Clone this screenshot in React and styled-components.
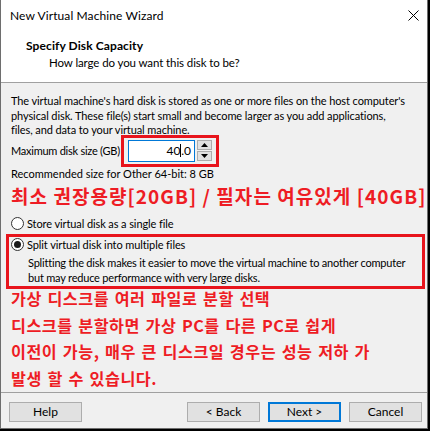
import React from "react";
import styled, { createGlobalStyle } from "styled-components";

const GlobalStyle = createGlobalStyle`
  html, body {
    margin: 0;
    padding: 0;
    background: #000;
  }
  body {
    font-family: Lato, "Liberation Sans", "Noto Sans CJK KR", sans-serif;
    font-size: 11px;
    letter-spacing: -0.1px;
    color: #000;
  }
`;

const Window = styled.div`
  width: 426px;
  height: 428px;
  border: 1px solid #6e6e6e;
  border-top: none;
  background: #f0f0f0;
  display: flex;
  flex-direction: column;
`;

const TitleBar = styled.div`
  flex-shrink: 0;
  height: 30px;
  background: #fff;
  display: flex;
  align-items: center;
  justify-content: space-between;
  padding: 0 0 0 9px;
  font-size: 12px;
  letter-spacing: 0.1px;
`;

const CloseBox = styled.div`
  width: 28px;
  height: 30px;
  display: flex;
  align-items: center;
  justify-content: center;
`;

const Header = styled.div`
  flex-shrink: 0;
  background: #fff;
  height: 53px;
  border-bottom: 1px solid #a0a0a0;
  padding: 8px 0 0 25px;
  box-sizing: border-box;
`;

const HeaderTitle = styled.div`
  font-weight: bold;
  font-size: 12px;
  letter-spacing: 0.1px;
  line-height: 15px;
`;

const HeaderSub = styled.div`
  margin: 2px 0 0 23px;
  line-height: 15px;
  font-size: 11.5px;
`;

const Body = styled.div`
  flex: 1;
  min-height: 0;
  padding: 11px 4px 0 10px;
  display: flex;
  flex-direction: column;
`;

const Paragraph = styled.p`
  margin: 0;
  line-height: 14.5px;
  white-space: nowrap;
`;

const SizeRow = styled.div`
  display: flex;
  align-items: center;
  height: 31px;
  margin-top: -2.5px;
`;

const SizeLabel = styled.span`
  letter-spacing: -0.25px;
  margin-right: 1px;
`;

const Highlight = styled.div`
  border: 3px solid #e8141c;
  display: flex;
  align-items: center;
  padding: 2px 4px;
`;

const NumberBox = styled.div`
  width: 67px;
  height: 22px;
  border: 1px solid #0078d7;
  background: #fff;
  display: flex;
  align-items: center;
  justify-content: flex-end;
  padding-right: 3px;
  box-sizing: border-box;
  font-size: 12px;
`;

const Caret = styled.span`
  display: inline-block;
  width: 1px;
  height: 13px;
  background: #000;
`;

const Spin = styled.div`
  display: flex;
  flex-direction: column;
  gap: 1px;
  margin-left: 2px;
`;

const SpinButton = styled.div`
  width: 15px;
  height: 10px;
  box-sizing: border-box;
  border: 1px solid #adadad;
  background: #e1e1e1;
  display: flex;
  align-items: center;
  justify-content: center;
`;

const Recommended = styled.div`
  margin-top: 1px;
  line-height: 14px;
  letter-spacing: 0;
`;

const BigNote = styled.div`
  color: #ee1c24;
  font-family: "Noto Sans CJK KR", "Liberation Sans", sans-serif;
  font-weight: bold;
  font-size: 19px;
  line-height: 24px;
  margin-top: 3px;
  white-space: nowrap;
  letter-spacing: 1.05px;
`;

const RadioRow = styled.label`
  display: flex;
  align-items: center;
  height: ${(p) => p.$h || 18}px;
  margin-top: ${(p) => p.$mt || 0}px;
  gap: 3px;
`;

const RadioDot = styled.span`
  width: 11px;
  height: 11px;
  border-radius: 50%;
  border: 1px solid #333;
  background: #fff;
  display: flex;
  align-items: center;
  justify-content: center;
  &::after {
    content: "";
    width: 7px;
    height: 7px;
    border-radius: 50%;
    background: ${(p) => (p.$checked ? "#1a1a1a" : "transparent")};
  }
`;

const SplitBox = styled.div`
  border: 3px solid #e8141c;
  margin: 2px 0 0 -5px;
  padding: 0 0 1px 2px;
  width: 419px;
  box-sizing: border-box;
`;

const SplitDesc = styled.div`
  margin: 4px 0 0 17px;
  line-height: 14.5px;
  white-space: nowrap;
  letter-spacing: -0.2px;
`;

const KoreanNotes = styled.div`
  color: #ee1c24;
  font-family: "Noto Sans CJK KR", "Liberation Sans", sans-serif;
  font-weight: bold;
  font-size: 16.2px;
  line-height: 26.6px;
  margin-top: -4px;
  letter-spacing: 0.5px;
  word-spacing: 1.5px;
  white-space: nowrap;
`;

const Footer = styled.div`
  flex-shrink: 0;
  border-top: 1px solid #a0a0a0;
  height: 33px;
  display: flex;
  align-items: center;
  padding: 2px 5px 0 8px;
  margin-top: -2px;
  gap: 8px;
`;

const Spacer = styled.div`
  flex: 1;
`;

const Button = styled.div`
  width: 73px;
  height: 20px;
  box-sizing: border-box;
  background: #e1e1e1;
  border: ${(p) => (p.$primary ? "2px solid #0078d7" : "1px solid #adadad")};
  display: flex;
  align-items: center;
  justify-content: center;
  font-size: 12px;
  letter-spacing: 0;
`;

export default function App() {
  return (
    <>
      <GlobalStyle />
      <Window>
        <TitleBar>
          <span>New Virtual Machine Wizard</span>
          <CloseBox>
            <svg width="11" height="11" viewBox="0 0 11 11">
              <path d="M0.5 0.5 L10.5 10.5 M10.5 0.5 L0.5 10.5" stroke="#000" strokeWidth="1" />
            </svg>
          </CloseBox>
        </TitleBar>
        <Header>
          <HeaderTitle>Specify Disk Capacity</HeaderTitle>
          <HeaderSub>How large do you want this disk to be?</HeaderSub>
        </Header>
        <Body>
          <Paragraph>
            The virtual machine's hard disk is stored as one or more files on the host computer's
            <br />
            physical disk. These file(s) start small and become larger as you add applications,
            <br />
            files, and data to your virtual machine.
          </Paragraph>
          <SizeRow>
            <SizeLabel>Maximum disk size (GB)</SizeLabel>
            <Highlight>
              <NumberBox>
                40<Caret />.0
              </NumberBox>
              <Spin>
                <SpinButton>
                  <svg width="7" height="4" viewBox="0 0 7 4">
                    <path d="M0 4 L3.5 0 L7 4 Z" fill="#000" />
                  </svg>
                </SpinButton>
                <SpinButton>
                  <svg width="7" height="4" viewBox="0 0 7 4">
                    <path d="M0 0 L3.5 4 L7 0 Z" fill="#000" />
                  </svg>
                </SpinButton>
              </Spin>
            </Highlight>
          </SizeRow>
          <Recommended>Recommended size for Other 64-bit: 8 GB</Recommended>
          <BigNote>최소 권장용량[20GB] / 필자는 여유있게 [40GB]</BigNote>
          <RadioRow $mt={6}>
            <RadioDot />
            Store virtual disk as a single file
          </RadioRow>
          <SplitBox>
            <RadioRow $h={15}>
              <RadioDot $checked />
              Split virtual disk into multiple files
            </RadioRow>
            <SplitDesc>
              Splitting the disk makes it easier to move the virtual machine to another computer
              <br />
              but may reduce performance with very large disks.
            </SplitDesc>
          </SplitBox>
          <KoreanNotes>
            가상 디스크를 여러 파일로 분할 선택
            <br />
            디스크를 분할하면 가상 PC를 다른 PC로 쉽게
            <br />
            이전이 가능, 매우 큰 디스크일 경우는 성능 저하 가
            <br />
            발생 할 수 있습니다.
          </KoreanNotes>
        </Body>
        <Footer>
          <Button>Help</Button>
          <Spacer />
          <Button>&lt; Back</Button>
          <Button $primary>Next &gt;</Button>
          <Button>Cancel</Button>
        </Footer>
      </Window>
    </>
  );
}
